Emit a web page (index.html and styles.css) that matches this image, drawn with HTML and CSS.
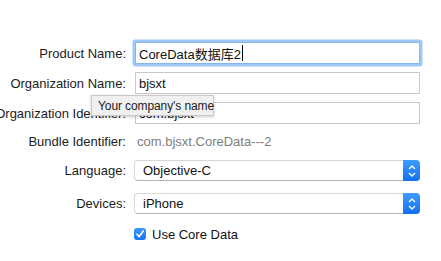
FILE: index.html
```html
<!DOCTYPE html>
<html lang="zh">
<head>
    <meta charset="UTF-8">
    <title>Project Options</title>
    <link rel="stylesheet" href="styles.css">
</head>
<body>
    <div class="options">
        <div class="row row-first">
            <div class="label"><span>Product Name:</span></div>
            <div class="field focused">
                <span class="field-text">CoreData数据库2</span><span class="caret"></span>
            </div>
        </div>
        <div class="row">
            <div class="label"><span>Organization Name:</span></div>
            <div class="field"><span class="field-text">bjsxt</span></div>
        </div>
        <div class="row">
            <div class="label"><span>Organization Identifier:</span></div>
            <div class="field"><span class="field-text">com.bjsxt</span></div>
        </div>
        <div class="row row-bundle">
            <div class="label"><span>Bundle Identifier:</span></div>
            <div class="value">com.bjsxt.CoreData---2</div>
        </div>
        <div class="row row-language">
            <div class="label"><span>Language:</span></div>
            <div class="popup">
                <span class="popup-text">Objective-C</span>
                <span class="stepper">
                    <svg width="16" height="20" viewBox="0 0 16 20">
                        <path d="M5 8 L8 5 L11 8" fill="none" stroke="#fff" stroke-width="1.4"/>
                        <path d="M5 12 L8 15 L11 12" fill="none" stroke="#fff" stroke-width="1.4"/>
                    </svg>
                </span>
            </div>
        </div>
        <div class="row row-devices">
            <div class="label"><span>Devices:</span></div>
            <div class="popup">
                <span class="popup-text">iPhone</span>
                <span class="stepper">
                    <svg width="16" height="20" viewBox="0 0 16 20">
                        <path d="M5 8 L8 5 L11 8" fill="none" stroke="#fff" stroke-width="1.4"/>
                        <path d="M5 12 L8 15 L11 12" fill="none" stroke="#fff" stroke-width="1.4"/>
                    </svg>
                </span>
            </div>
        </div>
        <div class="row row-check">
            <div class="label"></div>
            <label class="check">
                <span class="box">
                    <svg width="12" height="12" viewBox="0 0 12 12">
                        <path d="M3 6.2 L5.2 8.6 L9.2 3" fill="none" stroke="#fff" stroke-width="1.6" stroke-linecap="round" stroke-linejoin="round"/>
                    </svg>
                </span>
                <span>Use Core Data</span>
            </label>
        </div>
    </div>

    <div class="tooltip">Your company's name</div>
</body>
</html>
```

FILE: styles.css
```css
body {
    margin: 0;
    padding: 42px 0 0 0;
    background-color: #ffffff;
    font-family: 'Liberation Sans', Arial, 'Noto Sans CJK SC', sans-serif;
    font-size: 13px;
    color: #1c1c1c;
    overflow: hidden;
}
.options {
    display: flex;
    flex-direction: column;
    width: 441px;
}
.row {
    display: flex;
    align-items: center;
    height: 22px;
    margin-top: 8px;
}
.row-first {
    margin-top: 0;
}
.row-bundle {
    height: 18px;
}
.row-language {
    height: 21px;
    margin-top: 10px;
}
.row-devices {
    height: 21px;
    margin-top: 12px;
}
.row-check {
    height: 12px;
    margin-top: 14px;
}
.label {
    width: 126px;
    flex-shrink: 0;
    display: flex;
    justify-content: flex-end;
    white-space: nowrap;
    margin-right: 8px;
}
.field {
    box-sizing: border-box;
    width: 285px;
    height: 22px;
    margin-left: 1px;
    border: 1px solid #c8c8c8;
    display: flex;
    align-items: center;
    padding-left: 3px;
    background-color: #fff;
    color: #111;
    white-space: nowrap;
}
.focused {
    border-color: #86b5ea;
    border-radius: 1px;
    box-shadow: 0 0 0 2.5px #9dc8f8;
}
.caret {
    display: inline-block;
    width: 1px;
    height: 16px;
    background-color: #000;
    margin-left: 1px;
}
.value {
    color: #7d7d7d;
    padding-left: 3px;
    white-space: nowrap;
}
.popup {
    box-sizing: border-box;
    width: 286px;
    height: 21px;
    display: flex;
    align-items: center;
    justify-content: space-between;
    background-color: #fff;
    border: 1px solid #d6d6d6;
    border-bottom-color: #b4b4b4;
    border-radius: 4px;
    padding-left: 8px;
    color: #111;
}
.stepper {
    width: 17px;
    height: 21px;
    margin-right: -1px;
    display: flex;
    align-items: center;
    justify-content: center;
    background: linear-gradient(#3f9dfd, #1270f0);
    border-radius: 0 4px 4px 0;
}
.check {
    display: flex;
    align-items: center;
    gap: 6px;
    color: #111;
}
.box {
    width: 12px;
    height: 12px;
    border-radius: 3px;
    background: linear-gradient(#3b98fc, #1677f2);
    display: flex;
}
.tooltip {
    position: absolute;
    left: 91px;
    top: 95px;
    box-sizing: border-box;
    width: 123px;
    height: 21px;
    padding: 3px 0 0 6px;
    font-size: 12px;
    letter-spacing: -0.1px;
    color: #1c1c1c;
    background-color: #f0f0f0;
    border: 1px solid #c9c9c9;
    box-shadow: 0 1px 3px rgba(0, 0, 0, 0.2);
    white-space: nowrap;
}
```
